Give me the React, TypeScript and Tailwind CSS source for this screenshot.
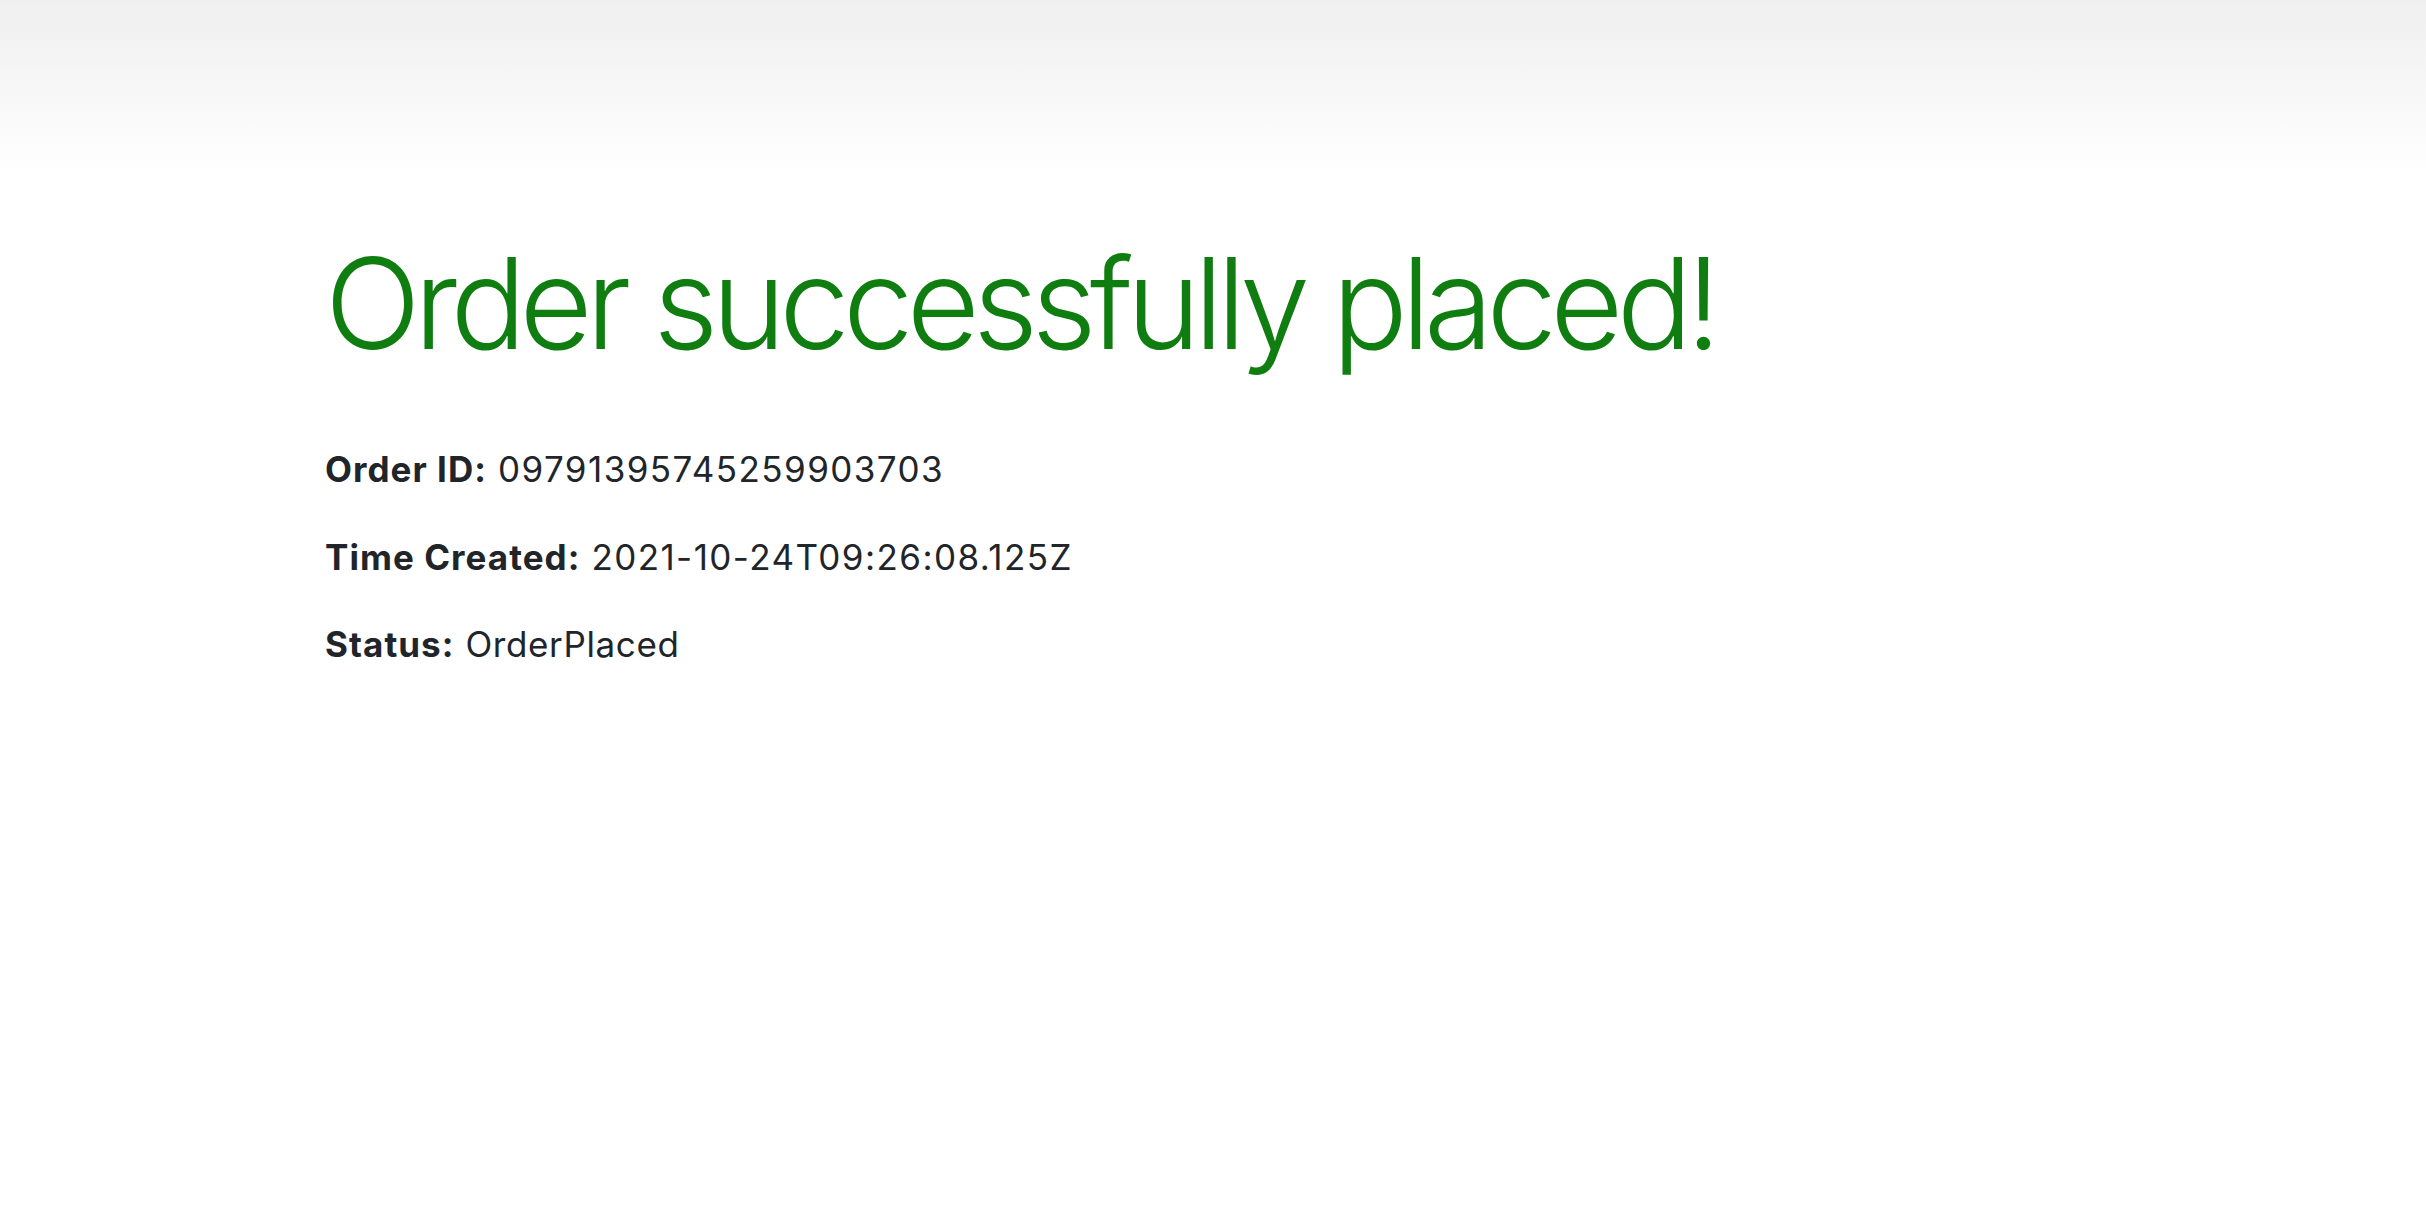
export default function App() {
  return (
    <div
      className="min-h-screen bg-white text-[#212529]"
      style={{ fontFamily: 'Inter, "Noto Sans", sans-serif' }}
    >
      {/* top fade */}
      <div className="h-[175px] bg-gradient-to-b from-[#efefef] to-white" />
      <main className="px-[325px] -mt-[175px] pt-[228px]">
        <h1 className="text-[126px] font-light leading-[1.2] text-[#107d10] tracking-[-0.053em]">
          Order successfully placed!
        </h1>
        <div className="mt-[64px] text-[35px] leading-[1.5] tracking-[0.03em]">
          <p className="mb-[35px]">
            <span className="font-bold">Order ID:</span>{' '}
            <span className="tracking-[0.041em]">09791395745259903703</span>
          </p>
          <p className="mb-[35px]">
            <span className="font-bold">Time Created:</span>{' '}
            <span className="tracking-[0.041em]">2021-10-24T09:26:08.125Z</span>
          </p>
          <p className="mb-[35px]">
            <span className="font-bold">Status:</span>{' '}
            <span className="tracking-[0.018em]">OrderPlaced</span>
          </p>
        </div>
      </main>
    </div>
  );
}
